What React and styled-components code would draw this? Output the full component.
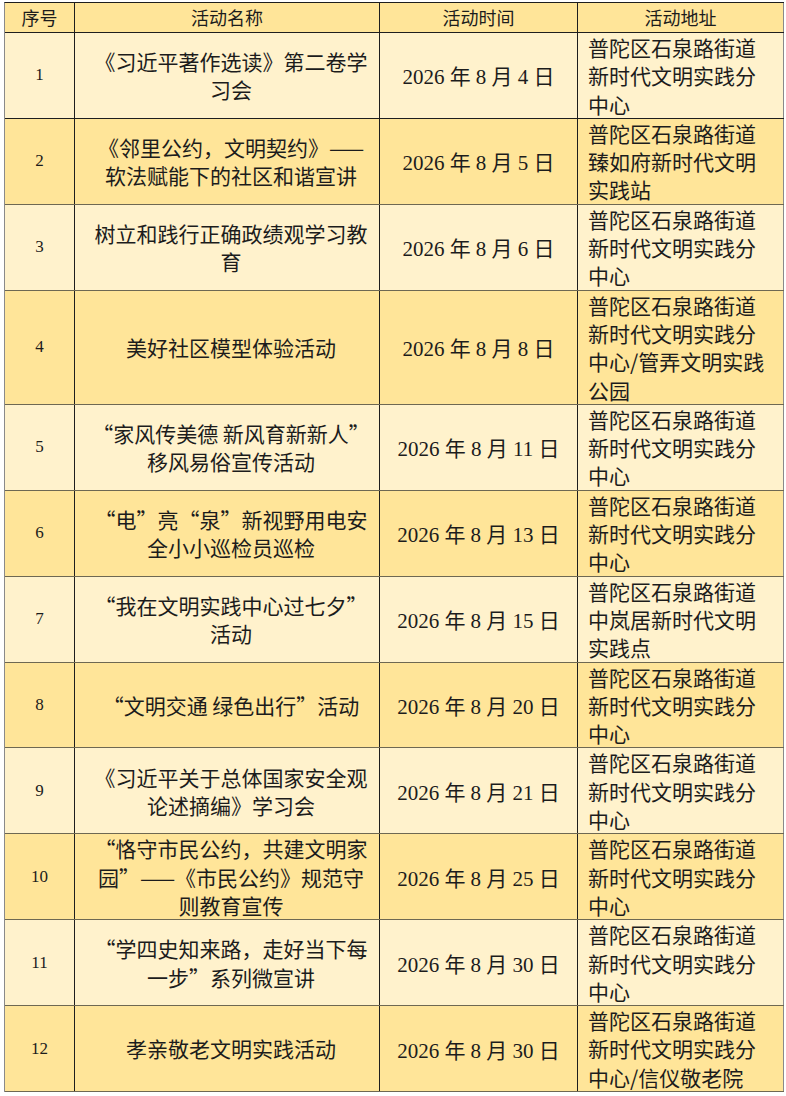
import React from "react";
import styled, { createGlobalStyle } from "styled-components";

const GlobalStyle = createGlobalStyle`
  html, body {
    margin: 0;
    padding: 0;
    background: #ffffff;
  }
  body {
    font-family: "Liberation Serif", "Noto Sans CJK SC", serif;
    color: #1c1c1c;
  }
`;

const Theme = {
  light: "#fff2cc",
  dark: "#ffe599",
  lineV: "#1e1e1e",
  lineH: "#6e6852",
  outer: "#8a8a8a",
};

const LOCAL = ["普陀区石泉路街道", "新时代文明实践分", "中心"];

const ROWS = [
  { name: ["《习近平著作选读》第二卷学", "习会"], day: "4", place: LOCAL },
  {
    name: ["《邻里公约，文明契约》——", "软法赋能下的社区和谐宣讲"],
    day: "5",
    place: ["普陀区石泉路街道", "臻如府新时代文明", "实践站"],
  },
  { name: ["树立和践行正确政绩观学习教", "育"], day: "6", place: LOCAL },
  {
    name: ["美好社区模型体验活动"],
    day: "8",
    place: ["普陀区石泉路街道", "新时代文明实践分", "中心/管弄文明实践", "公园"],
  },
  { name: ["“家风传美德 新风育新新人”", "移风易俗宣传活动"], day: "11", place: LOCAL },
  { name: ["“电”亮“泉”新视野用电安", "全小小巡检员巡检"], day: "13", place: LOCAL },
  {
    name: ["“我在文明实践中心过七夕”", "活动"],
    day: "15",
    place: ["普陀区石泉路街道", "中岚居新时代文明", "实践点"],
  },
  { name: ["“文明交通 绿色出行”活动"], day: "20", place: LOCAL },
  { name: ["《习近平关于总体国家安全观", "论述摘编》学习会"], day: "21", place: LOCAL },
  {
    name: ["“恪守市民公约，共建文明家", "园”——《市民公约》规范守", "则教育宣传"],
    day: "25",
    place: LOCAL,
  },
  { name: ["“学四史知来路，走好当下每", "一步”系列微宣讲"], day: "30", place: LOCAL },
  {
    name: ["孝亲敬老文明实践活动"],
    day: "30",
    place: ["普陀区石泉路街道", "新时代文明实践分", "中心/信仪敬老院"],
  },
];

// curly quotes come out narrow in Noto, so give each a full em box
function renderName(text) {
  return text.split(/([“”])/).map((part, k) => {
    if (part === "“") return <Quote key={k} $open>{part}</Quote>;
    if (part === "”") return <Quote key={k}>{part}</Quote>;
    return part;
  });
}

function App() {
  return (
    <>
      <GlobalStyle />
      <Table>
        <Row $bg={Theme.dark} $strong>
          <HeadCell>序号</HeadCell>
          <HeadCell>活动名称</HeadCell>
          <HeadCell>活动时间</HeadCell>
          <HeadCell>活动地址</HeadCell>
        </Row>
        {ROWS.map((row, i) => (
          <Row key={i} $bg={i % 2 === 0 ? Theme.light : Theme.dark} $strong={i === 0}>
            <NumCell>{i + 1}</NumCell>
            <NameCell>
              {row.name.map((line, j) => (
                <Line key={j}>{renderName(line)}</Line>
              ))}
            </NameCell>
            <DateCell>{`2026 年 8 月 ${row.day} 日`}</DateCell>
            <PlaceCell>
              {row.place.map((line, j) => (
                <Line key={j}>{line}</Line>
              ))}
            </PlaceCell>
          </Row>
        ))}
      </Table>
    </>
  );
}

export default App;

const Table = styled.div`
  width: fit-content;
  margin: 2px 0 0 4px;
  display: flex;
  flex-direction: column;
  border-top: 1px solid ${Theme.lineV};
  border-left: 1px solid ${Theme.outer};
`;

const Row = styled.div`
  display: grid;
  grid-template-columns: 70px 305px 198px 206px;
  background-color: ${(props) => props.$bg};
  border-bottom: 1px solid ${(props) => (props.$strong ? Theme.lineV : Theme.lineH)};
`;

const Cell = styled.div`
  box-sizing: border-box;
  border-right: 1px solid ${Theme.lineV};
  display: flex;
  flex-direction: column;
  justify-content: center;
  align-items: center;
  white-space: nowrap;
  &:last-child {
    border-right-color: ${Theme.outer};
  }
`;

const HeadCell = styled(Cell)`
  height: 29px;
  font-family: "Noto Sans CJK SC", sans-serif;
  font-size: 18px;
  line-height: 29px;
`;

const NumCell = styled(Cell)`
  font-family: "Liberation Serif", serif;
  font-size: 17px;
`;

const NameCell = styled(Cell)`
  font-family: "Noto Sans CJK SC", sans-serif;
  font-size: 21px;
  line-height: 28.3px;
  padding-left: 8px;
`;

const Quote = styled.span`
  display: inline-block;
  width: 1em;
  text-align: ${(props) => (props.$open ? "right" : "left")};
`;

const DateCell = styled(Cell)`
  font-family: "Liberation Serif", "Noto Sans CJK SC", serif;
  font-size: 21px;
`;

const PlaceCell = styled(Cell)`
  align-items: flex-start;
  padding-left: 10px;
  font-family: "Noto Sans CJK SC", sans-serif;
  font-size: 21px;
  line-height: 28.3px;
`;

const Line = styled.div`
  height: 28.3px;
`;
